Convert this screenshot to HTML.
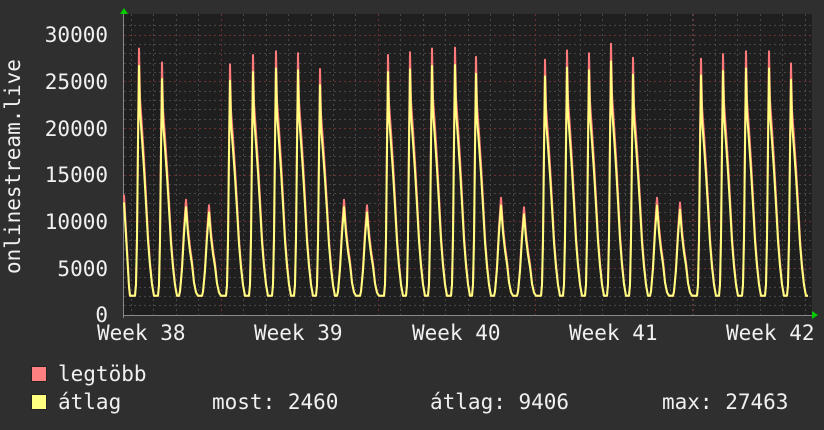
<!DOCTYPE html>
<html><head><meta charset="utf-8"><style>
html,body{margin:0;padding:0;background:#2f2f2f;}
body{width:824px;height:430px;overflow:hidden;position:relative;}
svg{position:absolute;left:0;top:0;}
text{font-family:"DejaVu Sans Mono","Liberation Mono",monospace;font-size:21px;fill:#f0f0f0;}
</style></head><body>
<svg id="g" width="824" height="430" xmlns="http://www.w3.org/2000/svg">
<rect x="124" y="14" width="688" height="301" fill="#1f1f1f"/>
<g id="grid"></g>
<g id="lines"></g>
<polygon points="120,14 128,14 124,8" fill="#00cc00"/>
<polygon points="812,311 812,319 818,315" fill="#00cc00"/>
<g text-anchor="end">
<text x="108" y="42">30000</text>
<text x="108" y="89">25000</text>
<text x="108" y="136">20000</text>
<text x="108" y="182">15000</text>
<text x="108" y="229">10000</text>
<text x="108" y="276">5000</text>
<text x="108" y="322">0</text>
</g>
<text transform="translate(20,274) rotate(-90)">onlinestream.live</text>
<text x="97" y="340">Week 38</text>
<text x="254" y="340">Week 39</text>
<text x="412" y="340">Week 40</text>
<text x="569" y="340">Week 41</text>
<text x="726" y="340">Week 42</text>
<rect x="31.5" y="366.5" width="15" height="15" fill="#ff8080" stroke="#222"/>
<rect x="31.5" y="394.5" width="15" height="15" fill="#ffff80" stroke="#222"/>
<text x="58" y="381">legtöbb</text>
<text x="58" y="409">átlag</text>
<text x="212" y="409">most: 2460</text>
<text x="430" y="409">átlag: 9406</text>
<text x="662" y="409">max: 27463</text>
</svg>
<script>
var ns="http://www.w3.org/2000/svg";
function ln(g,x1,y1,x2,y2,c,d,w){var l=document.createElementNS(ns,"line");l.setAttribute("x1",x1);l.setAttribute("y1",y1);l.setAttribute("x2",x2);l.setAttribute("y2",y2);l.setAttribute("stroke",c);l.setAttribute("stroke-width",w||1);if(d)l.setAttribute("stroke-dasharray",d);g.appendChild(l);}
var grid=document.getElementById("grid");
function Y(v){return 314.5-v*280/30000;}
for(var v=1000;v<=31000;v+=1000){var y=Math.round(Y(v))+0.5;if(y<14)break;ln(grid,124,y,812,y,v%5000==0?"#6e3030":"#474747","2,3");}
for(var x=131;x<812;x+=22.45){var xx=Math.round(x)+0.5;ln(grid,xx,14,xx,315,"#474747","2,3");}
for(var x=221;x<812;x+=157.2){var xx=Math.round(x)+0.5;ln(grid,xx,14,xx,315,"#6e3030","2,3");}
ln(grid,124,315.5,812,315.5,"#888");ln(grid,123.5,14,123.5,318,"#888");
var peaks=[[139,28500],[162,27000],[186,12300,1],[209,11700,1],[230,26800],[253,27800],[276,28200],[298,28000],[320,26300],[344,12300,1],[367,11700,1],[388,27800],[410,28100],[432,28500],[455,28600],[476,27600],[501,12500,1],[524,11500,1],[545,27300],[567,28300],[589,28000],[611,29000],[633,27500],[657,12500,1],[680,12000,1],[701,27400],[723,27900],[746,28200],[769,28200],[791,26900]];
var WD=[[-4,0],[-3,0.05],[-2,0.25],[-1,0.65],[0,1],[1,0.8],[3,0.68],[5,0.55],[7,0.4],[9,0.24],[11,0.13],[13,0.05],[15,0]];
var WE=[[-7,0],[-6,0.05],[-4,0.3],[-2,0.7],[-1,0.85],[0,1],[1,0.85],[2,0.7],[4,0.5],[6,0.35],[8,0.15],[10,0.04],[12,0]];
function prof(t,d){if(d<=t[0][0]||d>=t[t.length-1][0])return 0;for(var i=1;i<t.length;i++){if(d<=t[i][0]){var a=t[i-1],b=t[i];return a[1]+(b[1]-a[1])*(d-a[0])/(b[0]-a[0]);}}return 0;}
function val(x){var base=2000,s=0;
for(var i=0;i<peaks.length;i++){var p=peaks[i],a=p[1]/1.07-base;s=Math.max(s,a*prof(p[2]?WE:WD,x-p[0]));}
var v=base+s;
if(x<130)v=Math.max(v,12000-(x-124)*1800);
return v;}
var pa="",pb="";
for(var x=124;x<=808;x++){var v=val(x);pa+=(x==124?"M":"L")+x+","+Y(v*(v>4000?1.07:1.0)).toFixed(1);pb+=(x==124?"M":"L")+x+","+Y(v).toFixed(1);}
var L=document.getElementById("lines");
function pth(d,c){var p=document.createElementNS(ns,"path");p.setAttribute("d",d);p.setAttribute("stroke",c);p.setAttribute("stroke-width",2);p.setAttribute("fill","none");p.setAttribute("stroke-linejoin","round");L.appendChild(p);}
pth(pa,"#ff7a7a");pth(pb,"#ffff80");
</script>
</body></html>
